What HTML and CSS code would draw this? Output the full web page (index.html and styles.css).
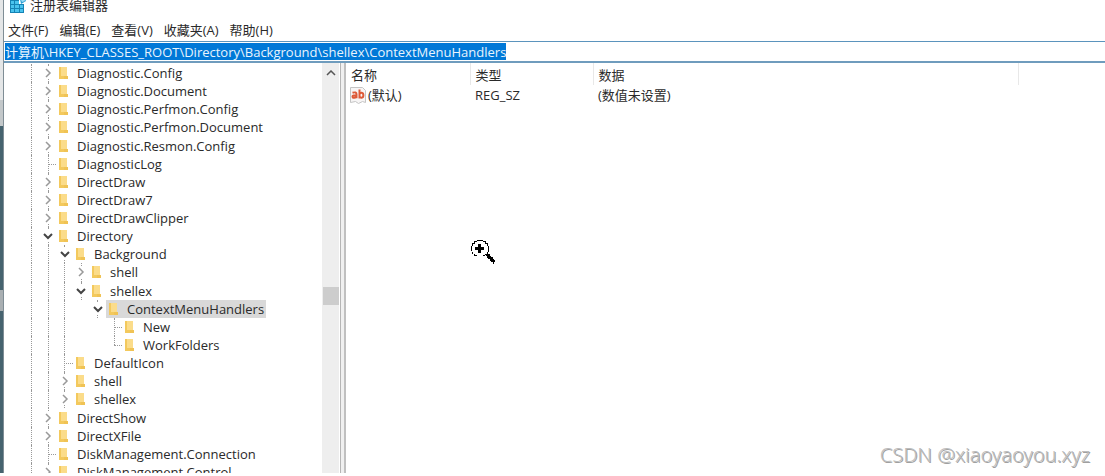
FILE: index.html
```html
<!DOCTYPE html>
<html lang="zh-CN">
<head>
<meta charset="utf-8">
<title>注册表编辑器</title>
<link rel="stylesheet" href="styles.css">
</head>
<body>
<div class="window">
  <header class="titlebar">
    <svg class="app-icon" viewBox="0 0 16 16" aria-hidden="true">
      <path fill="#1583b5" d="M0 3h14v13H0z"/>
      <path fill="#49c3ee" d="M1 4h3v3H1zM5 4h4v3H5zM1 8h3v3H1zM5 8h4v3H5zM10 8h3v3h-3zM1 12h3v3H1zM5 12h4v3H5zM10 12h3v3h-3z"/>
      <path fill="#fff" d="M9 0h7v7H9z"/>
      <path fill="#2b9fd2" d="M10 2l4-2 2 4-5 3z"/>
      <path fill="#9bdcf5" d="M11 3l3-1 1 2-3 1z"/>
    </svg>
    <h1 class="title">注册表编辑器</h1>
  </header>
  <nav class="menubar">
    <button class="menu" type="button">文件(F)</button>
    <button class="menu" type="button">编辑(E)</button>
    <button class="menu" type="button">查看(V)</button>
    <button class="menu" type="button">收藏夹(A)</button>
    <button class="menu" type="button">帮助(H)</button>
  </nav>
  <div class="address"><input class="address-input" type="text" aria-label="地址" value="计算机\HKEY_CLASSES_ROOT\Directory\Background\shellex\ContextMenuHandlers"></div>
  <main class="panes">
    <div class="tree-pane">
      <ul class="tree" id="tree" role="tree" aria-label="注册表项"></ul>
      <div class="scrollbar">
        <button class="scroll-up" type="button" aria-label="向上滚动"><svg viewBox="0 0 10 6" aria-hidden="true"><path d="M1 5l4-4 4 4"/></svg></button>
        <div class="thumb"></div>
      </div>
    </div>
    <div class="splitter"></div>
    <section class="values">
      <table class="value-table">
        <colgroup><col class="col-name"><col class="col-type"><col class="col-data"><col></colgroup>
        <thead><tr><th>名称</th><th>类型</th><th>数据</th><th></th></tr></thead>
        <tbody><tr>
          <td class="name-cell"><span class="value-name"><svg class="string-icon" viewBox="0 0 16 17" aria-hidden="true"><path fill="#f7f5f5" stroke="#c4c4c4" d="M.5.5h12l3 3v12l-3-1-4 2-3-2-5 1z"/><path fill="none" stroke="#dd5a38" stroke-width="2" d="M2.500 5.800q4-1.300 4 1.400v4M6.500 8.200q-4-.2-4 1.400 0 1.400 1.700 1.200 2.300-.3 2.300-2M9.500 2.500v9M9.500 7q.8-1.500 2.200-1.300 1.700.3 1.700 2.500t-1.700 2.500q-1.400.2-2.200-1.200"/></svg>(默认)</span></td>
          <td>REG_SZ</td><td>(数值未设置)</td><td></td>
        </tr></tbody>
      </table>
    </section>
  </main>
  <svg class="cursor" viewBox="0 0 24 24" shape-rendering="crispEdges" aria-hidden="true">
    <path fill="#000" d="M6 0h6v1h3v2h2v3h1v6h-1v2h2v2h1v1h2v2h1v1h1v2h-1v2h-1v-2h-2v-1h-1v-2h-2v-1h-1v-2h-1v-1h-1v1h-2v1H6v-1H3v-2H1v-3H0V6h1V3h2V1h3z"/>
    <path fill="#fff" d="M6 1h6v1h2v2h2v2h1v6h-1v2h-2v1h-2v2H6v-2H4v-1H2v-2H1V6h1V4h2V2h2z"/>
    <path fill="#000" d="M7 4h3v3h3v3h-3v3H7v-3H4V7h3z"/>
  </svg>
  <div class="watermark">CSDN @xiaoyaoyou.xyz</div>
</div>
<script src="tree.js"></script>
</body>
</html>
```
FILE: styles.css
```css
* { box-sizing: border-box; }
body { margin: 0; background: #fff; }
.window {
  position: relative;
  display: flex;
  flex-direction: column;
  height: 100vh;
  padding-bottom: 3px;
  overflow: hidden;
  color: #2a2a2a;
  font: 13px/18px "Open Sans", "Noto Sans CJK SC", sans-serif;
}
.window::before {
  content: "";
  position: absolute;
  left: 0;
  top: 0;
  bottom: 3px;
  width: 3px;
  border-right: 1px solid #7f8d95;
  background: linear-gradient(#e4e6e7 0 100px, #c3c8ca 100px 126px, #46636f 126px 290px, #a9afb2 290px 311px, #46636f 311px);
}
.titlebar { display: flex; height: 20px; padding-left: 10px; gap: 4px; align-items: flex-start; }
.app-icon { width: 16px; height: 16px; margin-top: -3px; }
.title { margin: -4px 0 0; font-size: 13px; font-weight: 400; line-height: 18px; }
.menubar { display: flex; height: 21px; padding: 0 0 2px 8px; gap: 11px; align-items: center; }
.menu { padding: 0; border: 0; background: none; color: inherit; font: inherit; }
.address { display: flex; height: 22px; margin-left: 3px; border-top: 1px solid #5b94bd; border-bottom: 2px solid #6f9cbd; padding: 1px 2px; }
.address-input { flex: 1; min-width: 0; padding: 0; border: 0; outline: 0; color: #1c1c1c; background: #fff; font: inherit; }
.address-input::selection { color: #e8f4fd; background: #0078d7; }
.panes { flex: 1; display: flex; min-height: 0; }
.tree-pane { flex: 0 0 340px; display: flex; overflow: hidden; }
.tree {
  flex: 1;
  display: grid;
  grid-auto-rows: 1fr;
  height: calc(100% + 8px);
  margin: 0;
  padding: 1px 0 0 23px;
  list-style: none;
}
.row { display: flex; align-items: center; min-width: 0; }
.guide { flex: none; align-self: stretch; width: 16px; position: relative; display: flex; align-items: center; justify-content: center; }
.guide:nth-child(odd) { width: 17px; }
.line::before { content: ""; position: absolute; left: 8px; top: 0; bottom: 0; border-left: 1px dotted #999; }
.end::before { bottom: 50%; }
.branch::after { content: ""; position: absolute; left: 8px; right: 0; top: 50%; border-top: 1px dotted #999; }
.toggle { position: relative; width: 12px; height: 12px; padding: 0; border: 0; background: #fff; display: flex; align-items: center; justify-content: center; }
.toggle svg { width: 10px; height: 10px; fill: none; stroke: #999; stroke-width: 1.500; }
.toggle.open svg { stroke: #444; stroke-width: 2; }
.item { display: flex; align-items: center; align-self: stretch; padding: 0 2px; gap: 8px; }
.selected { background: #d9d9d9; }
.folder { width: 11px; height: 14px; }
.scrollbar { flex: 0 0 17px; margin-right: 1px; background: #eee; display: flex; flex-direction: column; align-items: center; }
.scroll-up { width: 17px; height: 19px; padding: 0; border: 0; background: none; display: grid; place-items: center; }
.scroll-up svg { width: 10px; height: 6px; fill: none; stroke: #555; stroke-width: 1.500; }
.thumb { width: 16px; height: 18px; margin-top: 205px; background: #cdcdcd; }
.splitter { flex: 0 0 6px; border-left: 1px solid #b5b5b5; border-right: 2px solid #c0c0c0; background: #f0f0f0; }
.values { flex: 1; min-width: 0; }
.value-table { width: 100%; border-collapse: collapse; table-layout: fixed; }
.col-name { width: 124px; }
.col-type { width: 123px; }
.col-data { width: 425px; }
.value-table th { height: 22px; padding: 2px 0 0 5px; border-right: 1px solid #e8e8e8; text-align: left; font-weight: 400; }
.value-table th:last-child { border-right: 0; }
.value-table td { height: 20px; padding: 0 0 0 5px; }
.value-table .name-cell { padding-left: 4px; }
.value-name { display: flex; align-items: center; gap: 2px; }
.string-icon { width: 16px; height: 17px; }
.cursor { position: absolute; left: 471px; top: 240px; width: 24px; height: 24px; }
.watermark { position: absolute; right: 15px; bottom: 8px; color: #bdbdbd; text-shadow: 1px 1px 0 #a0a0a0; font: 300 20px/26px "Noto Sans", sans-serif; }
```
FILE: tree.js
```js
// Guides: "|" line, " " blank, ">" closed, "v" open, "+" leaf branch, "L" last leaf branch
const rows = [
  ["|>", "Diagnostic.Config"], ["|>", "Diagnostic.Document"],
  ["|>", "Diagnostic.Perfmon.Config"], ["|>", "Diagnostic.Perfmon.Document"],
  ["|>", "Diagnostic.Resmon.Config"], ["|+", "DiagnosticLog"],
  ["|>", "DirectDraw"], ["|>", "DirectDraw7"], ["|>", "DirectDrawClipper"],
  ["|v", "Directory"], ["||v", "Background"], ["|||>", "shell"],
  ["|||v", "shellex"], ["||| v", "ContextMenuHandlers"],
  ["|||  +", "New"], ["|||  L", "WorkFolders"],
  ["||+", "DefaultIcon"], ["||>", "shell"], ["||>", "shellex"],
  ["|>", "DirectShow"], ["|>", "DirectXFile"],
  ["|+", "DiskManagement.Connection"], ["|>", "DiskManagement.Control"]
];
const folder = '<svg class="folder" viewBox="0 0 11 14" aria-hidden="true"><path fill="#f3c95d" d="M1 1h8v9l1 1v2H1z"/><path fill="#fbdc8a" d="M3 1h6v9H3z"/><path fill="#f0c355" d="M6 10h4v3H6z"/></svg>';
const closed = '<button class="toggle" type="button" aria-label="展开"><svg viewBox="0 0 10 10"><path d="M3 1l4 4-4 4"/></svg></button>';
const open = '<button class="toggle open" type="button" aria-label="折叠"><svg viewBox="0 0 10 10"><path d="M1 3l4 4 4-4"/></svg></button>';
const cells = {
  "|": '<span class="guide line"></span>',
  " ": '<span class="guide"></span>',
  "+": '<span class="guide line branch"></span>',
  "L": '<span class="guide line end branch"></span>',
  ">": '<span class="guide line">' + closed + '</span>',
  "v": '<span class="guide line">' + open + '</span>'
};
document.getElementById("tree").innerHTML = rows.map(([guides, name]) => {
  const selected = name === "ContextMenuHandlers";
  return '<li class="row" role="treeitem" aria-level="' + guides.length + '" aria-selected="' + selected + '">' +
    [...guides].map(g => cells[g]).join("") +
    '<span class="item' + (selected ? " selected" : "") + '">' + folder + name + "</span></li>";
}).join("");
const address = document.querySelector(".address-input");
address.focus();
address.select();
```
